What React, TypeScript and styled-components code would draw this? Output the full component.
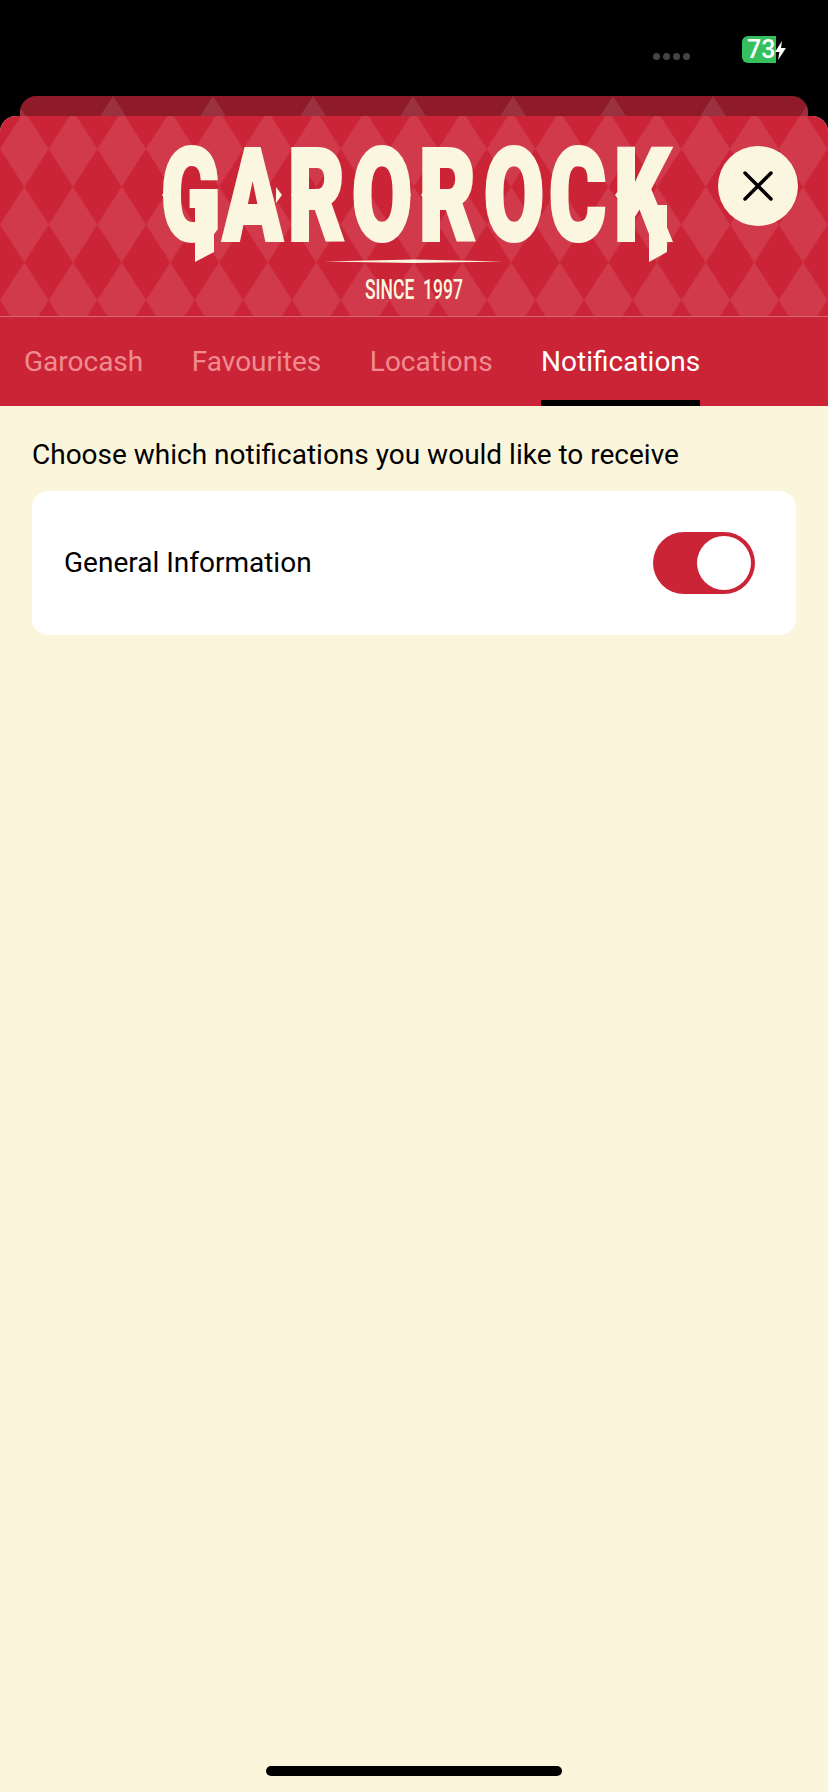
import React, { useId } from 'react';
import styled, { createGlobalStyle } from 'styled-components';

const RED = '#cb2437';
const CREAM = '#fbf5dc';
const LOGO = '#fbf6e0';

const GlobalStyle = createGlobalStyle`
  html, body {
    margin: 0;
    padding: 0;
    background: #000;
  }
  * {
    box-sizing: border-box;
  }
`;

const Screen = styled.div`
  width: 828px;
  height: 1792px;
  display: flex;
  flex-direction: column;
  overflow: hidden;
  background: #000;
  font-family: Roboto, 'Liberation Sans', sans-serif;
`;

const StatusBar = styled.div`
  height: 96px;
  flex: none;
  display: flex;
  justify-content: flex-end;
  align-items: flex-start;
  padding: 36px 52px 0 0;
`;

const Dots = styled.div`
  display: flex;
  gap: 3px;
  margin: 17px 52px 0 0;
`;

const Dot = styled.span`
  width: 7px;
  height: 7px;
  border-radius: 50%;
  background: #444;
`;

const Battery = styled.div`
  position: relative;
  width: 34px;
  height: 27px;
  border-radius: 6px 0 0 6px;
  background: #34c05c;
  color: #fff;
  font-size: 25px;
  font-weight: 500;
  line-height: 28px;
  padding-left: 5px;
  white-space: nowrap;
`;

const Bolt = styled.svg`
  position: absolute;
  left: 33px;
  top: 5px;
`;

const BackCard = styled.div`
  position: relative;
  height: 20px;
  flex: none;
  margin: 0 20px;
  overflow: hidden;
  border-radius: 16px 16px 0 0;
  background: #8f1a28;
`;

const Sheet = styled.div`
  flex: 1;
  display: flex;
  flex-direction: column;
  overflow: hidden;
  border-radius: 16px 16px 0 0;
  background: ${CREAM};
`;

const Header = styled.header`
  position: relative;
  height: 201px;
  flex: none;
  display: flex;
  justify-content: center;
  padding-top: 29px;
  background: ${RED};
  border-bottom: 1px solid rgba(255, 255, 255, 0.3);
`;

const PatternLayer = styled.svg`
  position: absolute;
  inset: 0;
  width: 100%;
  height: 100%;
`;

const Logo = styled.svg`
  position: relative;
  display: block;
  overflow: visible;
`;

const CloseButton = styled.button`
  position: absolute;
  top: 30px;
  right: 30px;
  width: 80px;
  height: 80px;
  display: flex;
  align-items: center;
  justify-content: center;
  padding: 0;
  border: 0;
  border-radius: 50%;
  background: ${LOGO};
`;

const Tabs = styled.nav`
  height: 89px;
  flex: none;
  display: flex;
  gap: 48.5px;
  padding-left: 24px;
  background: ${RED};
`;

const Tab = styled.div<{ $active?: boolean }>`
  height: 100%;
  padding-top: 28px;
  font-size: 28px;
  line-height: 33px;
  color: ${(p) => (p.$active ? '#fff' : '#f08c90')};
  border-bottom: 6px solid ${(p) => (p.$active ? '#000' : 'transparent')};
`;

const Content = styled.main`
  flex: 1;
  display: flex;
  flex-direction: column;
  padding: 32px 32px 0;
`;

const Intro = styled.p`
  margin: 0 0 19px;
  font-size: 28px;
  line-height: 34px;
  color: #000;
`;

const OptionCard = styled.div`
  height: 144px;
  display: flex;
  align-items: center;
  justify-content: space-between;
  padding: 0 41px 0 32px;
  border-radius: 16px;
  background: #fff;
  font-size: 28px;
  color: #000;
`;

const OptionLabel = styled.span`
  margin-top: -2px;
`;

const Toggle = styled.div`
  width: 102px;
  height: 62px;
  display: flex;
  justify-content: flex-end;
  padding: 4px;
  border-radius: 31px;
  background: ${RED};
`;

const Knob = styled.span`
  width: 54px;
  height: 54px;
  border-radius: 50%;
  background: #fff;
`;

const HomeBar = styled.div`
  width: 296px;
  height: 10px;
  flex: none;
  margin: 0 auto 16px;
  border-radius: 5px;
  background: #000;
`;

// one diamond per tile, same tile height for both cards
const Diamonds = ({ width, height, x, y, fill }: { width: number; height: number; x: number; y: number; fill: string }) => {
  const id = useId();
  return (
    <PatternLayer aria-hidden="true">
      <defs>
        <pattern id={id} x={x} y={y} width={width} height={height} patternUnits="userSpaceOnUse">
          <polygon points={`${width / 2 - 24.33},${height / 2} ${width / 2},0 ${width / 2 + 24.33},${height / 2} ${width / 2},${height}`} fill={fill} />
        </pattern>
      </defs>
      <rect width="100%" height="100%" fill={`url(#${id})`} />
    </PatternLayer>
  );
};

// horizontal squeeze of the wordmark, glyph starts are given in page pixels
const LOGO_SX = 0.68;
const GLYPH_LEFTS = [161, 223, 288, 352, 419, 484, 549, 614];
const glyphX = GLYPH_LEFTS.map((l) => (l / LOGO_SX).toFixed(1)).join(' ');

// little points on the stems, at mid height of the letters
const SPIKES: [number, number][] = [
  [162, 1], [282, -1], [291, 1], [354, 1], [411, -1], [421, 1], [486, 1], [541, -1], [551, 1], [615, 1],
];

const GarorockLogo = () => (
  <Logo width={512} height={160} viewBox="158 145 512 160" fill={LOGO}>
    <text
      x={glyphX}
      y={240}
      transform={`scale(${LOGO_SX} 1)`}
      fontFamily="Roboto, sans-serif"
      fontWeight={900}
      fontSize={128}
      stroke={LOGO}
      strokeWidth={4}
    >
      GAROROCK
    </text>
    {SPIKES.map(([x, dir]) => (
      <polygon key={x} points={`${x},195 ${x + 6 * dir},187 ${x + 6 * dir},203`} />
    ))}
    <polygon points="195,196 214,196 214,252 195,262" />
    <polygon points="649,205 667,205 667,252 649,262" />
    <polygon points="324,261.5 414,259.5 503,261.5 414,263" />
    <text
      x={365}
      y={299}
      fontFamily="Roboto, sans-serif"
      fontWeight={500}
      fontSize={27}
      textLength={98}
      lengthAdjust="spacingAndGlyphs"
      xmlSpace="preserve"
    >
      SINCE  1997
    </text>
  </Logo>
);

export default function App() {
  return (
    <>
      <GlobalStyle />
      <Screen>
        <StatusBar>
          <Dots>
            <Dot />
            <Dot />
            <Dot />
            <Dot />
          </Dots>
          <Battery>
            73
            <Bolt width="11" height="19" viewBox="0 0 11 19">
              <polygon points="7,0 0,11 4.5,11 3,19 11,7 6,7" fill="#fff" />
            </Bolt>
          </Battery>
        </StatusBar>
        <BackCard>
          <Diamonds width={100} height={76} x={43} y={0} fill="rgba(255,255,255,0.1)" />
        </BackCard>
        <Sheet>
          <Header>
            <Diamonds width={48.67} height={75.7} x={0} y={-5} fill="rgba(255,255,255,0.1)" />
            <GarorockLogo />
            <CloseButton aria-label="Close">
              <svg width="30" height="30" viewBox="0 0 30 30" fill="none" stroke="#000" strokeWidth="3.5" strokeLinecap="round">
                <line x1="2" y1="2" x2="28" y2="28" />
                <line x1="28" y1="2" x2="2" y2="28" />
              </svg>
            </CloseButton>
          </Header>
          <Tabs>
            <Tab>Garocash</Tab>
            <Tab>Favourites</Tab>
            <Tab>Locations</Tab>
            <Tab $active>Notifications</Tab>
          </Tabs>
          <Content>
            <Intro>Choose which notifications you would like to receive</Intro>
            <OptionCard>
              <OptionLabel>General Information</OptionLabel>
              <Toggle>
                <Knob />
              </Toggle>
            </OptionCard>
          </Content>
          <HomeBar />
        </Sheet>
      </Screen>
    </>
  );
}
